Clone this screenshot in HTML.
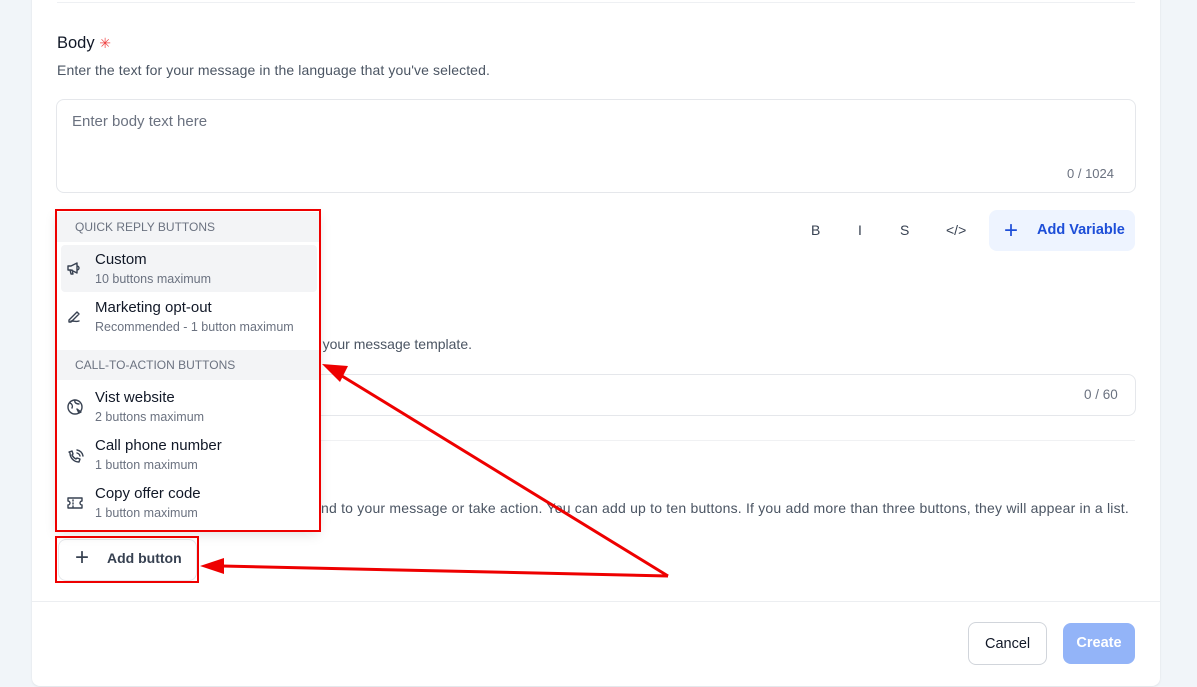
<!DOCTYPE html>
<html><head><style>
body{margin:0;width:1197px;height:687px;background:#f1f5f9;font-family:"Liberation Sans",sans-serif;position:relative;overflow:hidden;color:#111827}
.a{position:absolute}
.card{left:32px;top:-10px;width:1128px;height:696px;background:#fff;border-radius:8px;box-shadow:0 1px 2px rgba(0,0,0,.08)}
.muted{color:#4b5563;font-size:14px}
.box{border:1px solid #e5e7eb;border-radius:8px;background:#fff}
.menu{left:57px;top:211px;width:262px;height:319px;background:#fff;box-shadow:0 4px 12px rgba(0,0,0,.12)}
.hd{background:#f3f4f6;color:#6b7280;font-size:12px;height:30px;line-height:30px;padding-left:18px;width:244px;left:0}
.it .t{font-size:15px;color:#111827}
.it .s{font-size:12.5px;color:#6b7280;margin-top:4px}
.red{border:2px solid #e00;position:absolute}
</style></head><body>
<div class="a card"></div>
<div class="a" style="left:57px;top:2px;width:1078px;height:1px;background:#eef0f3"></div>
<div class="a" style="left:57px;top:34px;font-size:16.5px">Body <span style="color:#ef4444;font-size:14px">✳</span></div>
<div class="a muted" style="left:57px;top:62px;letter-spacing:.1px">Enter the text for your message in the language that you've selected.</div>
<div class="a box" style="left:56px;top:99px;width:1078px;height:92px"></div>
<div class="a" style="left:72px;top:113px;font-size:15px;color:#6b7280">Enter body text here</div>
<div class="a" style="left:1067px;top:166px;font-size:13px;color:#6b7280">0 / 1024</div>
<div class="a" style="left:811px;top:222px;font-size:14px;color:#374151">B</div>
<div class="a" style="left:858px;top:222px;font-size:14px;color:#374151">I</div>
<div class="a" style="left:900px;top:222px;font-size:14px;color:#374151">S</div>
<div class="a" style="left:946px;top:222px;font-size:14px;color:#374151">&lt;/&gt;</div>
<div class="a" style="left:989px;top:210px;width:146px;height:41px;background:#eef4ff;border-radius:8px"></div>
<div class="a" style="left:1004px;top:217px;font-size:24px;color:#1d4ed8;font-weight:300">+</div>
<div class="a" style="left:1037px;top:222px;font-size:14.5px;color:#1d4ed8;font-weight:bold">Add Variable</div>
<div class="a muted" style="right:725px;top:336px">your message template.</div>
<div class="a box" style="left:56px;top:374px;width:1078px;height:40px"></div>
<div class="a" style="left:1084px;top:387px;font-size:13.5px;color:#6b7280">0 / 60</div>
<div class="a" style="left:57px;top:440px;width:1078px;height:1px;background:#f0f1f3"></div>
<div class="a muted" style="right:68px;top:500px;white-space:nowrap;letter-spacing:.2px">Use buttons to let customers respond to your message or take action. You can add up to ten buttons. If you add more than three buttons, they will appear in a list.</div>
<div class="a box" style="left:58px;top:539px;width:137px;height:40px"></div>
<div class="a" style="left:75px;top:544px;font-size:24px;color:#374151;font-weight:300">+</div>
<div class="a" style="left:107px;top:550px;font-size:14px;color:#374151;font-weight:bold">Add button</div>
<div class="a" style="left:32px;top:601px;width:1128px;height:1px;background:#eceef1"></div>
<div class="a box" style="left:968px;top:622px;width:77px;height:41px;border-color:#d1d5db"></div>
<div class="a" style="left:985px;top:636px;font-size:14.5px;color:#111827">Cancel</div>
<div class="a" style="left:1063px;top:623px;width:72px;height:41px;background:#93b4f8;border-radius:8px;color:#fff;font-size:14.5px;line-height:41px;text-align:center;font-weight:bold">Create</div>

<div class="a menu">
 <div class="a hd" style="top:1px">QUICK REPLY BUTTONS</div>
 <div class="a" style="left:4px;top:34px;width:256px;height:47px;background:#f3f4f6;border-radius:4px"></div>
 <div class="a it" style="left:38px;top:40px"><div class="t">Custom</div><div class="s">10 buttons maximum</div></div>
 <div class="a it" style="left:38px;top:88px"><div class="t">Marketing opt-out</div><div class="s">Recommended - 1 button maximum</div></div>
 <div class="a hd" style="top:139px">CALL-TO-ACTION BUTTONS</div>
 <div class="a it" style="left:38px;top:178px"><div class="t">Vist website</div><div class="s">2 buttons maximum</div></div>
 <div class="a it" style="left:38px;top:226px"><div class="t">Call phone number</div><div class="s">1 button maximum</div></div>
 <div class="a it" style="left:38px;top:274px"><div class="t">Copy offer code</div><div class="s">1 button maximum</div></div>
 <svg class="a" style="left:8px;top:48px" width="20" height="270" fill="none" stroke="#374151" stroke-width="1.4" stroke-linecap="round" stroke-linejoin="round">
  <path d="M3 7h3l6-3v10l-6-3H3z M5 11l1 4h2l-1-4 M12 7a2 2 0 0 1 0 4"/>
  <path d="M4 63l8-8 2 2-8 8H4z M6 64c3 0 5 1 8 0" transform="translate(0,-2)"/>
  <g transform="translate(0,-12)"><circle cx="10" cy="160" r="7"/><path d="M5 156c2 1 3 3 2 5M10 153c-1 3 2 4 4 4M12 162l4 3-2 1z"/></g>
  <path transform="translate(0,-6)" d="M5 200c0 5 4 9 9 9l1-3-3-1-1 1c-2-1-3-2-4-4l1-1-1-3-3 1z M12 200a4 4 0 0 1 3 3M12 197a7 7 0 0 1 6 6"/>
  <path transform="translate(0,-8)" d="M3 247h14v3a2 2 0 0 0 0 4v3H3v-3a2 2 0 0 0 0-4z M8 249v1M8 252v1M8 255v1"/>
 </svg>
</div>
<div class="red" style="left:55px;top:209px;width:262px;height:319px"></div>
<div class="red" style="left:55px;top:536px;width:140px;height:43px"></div>
<svg class="a" style="left:0;top:0" width="1197" height="687">
 <line x1="668" y1="576" x2="342" y2="376" stroke="#e00" stroke-width="3"/>
 <polygon points="322,364 348,366 340,382" fill="#e00"/>
 <line x1="668" y1="576" x2="222" y2="566" stroke="#e00" stroke-width="3"/>
 <polygon points="200,566 224,558 224,574" fill="#e00"/>
</svg>
</body></html>
